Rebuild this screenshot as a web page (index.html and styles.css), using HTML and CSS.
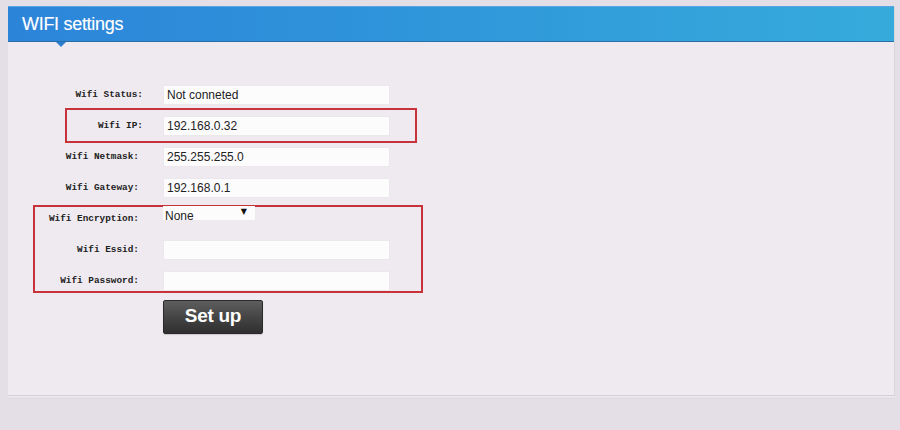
FILE: index.html
```html
<!DOCTYPE html>
<html>
<head>
<meta charset="utf-8">
<title>WIFI settings</title>
<link rel="stylesheet" href="styles.css">
</head>
<body>
<div class="panel">
  <div class="header"><h1 class="title">WIFI settings</h1><span class="pointer"></span></div>
  <form class="form">
    <div class="row"><label class="label">Wifi Status:</label><input class="field" type="text" value="Not conneted"></div>
    <div class="row mark-one"><label class="label">Wifi IP:</label><input class="field" type="text" value="192.168.0.32"></div>
    <div class="row"><label class="label narrow">Wifi Netmask:</label><input class="field" type="text" value="255.255.255.0"></div>
    <div class="row"><label class="label narrow">Wifi Gateway:</label><input class="field" type="text" value="192.168.0.1"></div>
    <div class="group mark-two">
      <div class="row"><label class="label narrow">Wifi Encryption:</label><span class="select-wrap"><select class="select"><option>None</option></select></span></div>
      <div class="row"><label class="label narrow">Wifi Essid:</label><input class="field" type="text" value=""></div>
      <div class="row"><label class="label narrow">Wifi Password:</label><input class="field" type="password" value=""></div>
    </div>
    <button class="button" type="button">Set up</button>
  </form>
</div>
</body>
</html>
```

FILE: styles.css
```css
html, body {
  margin: 0;
  padding: 0;
}
body {
  background: #e4dfe6;
  width: 900px;
  height: 430px;
  overflow: hidden;
  padding: 6px 0 0 8px;
  box-sizing: border-box;
}
.panel {
  width: 887px;
  height: 390px;
  background: #efeaf0;
  border-right: 1px solid #d9d4da;
  border-bottom: 1px solid #d6d1d8;
  box-shadow: 0 2px 0 #ebe6ec, 0 3px 0 #dcd7dd;
  box-sizing: border-box;
  position: relative;
}
.header {
  height: 36px;
  background: linear-gradient(to right, #2c84d9 0%, #2f95da 45%, #36abdb 100%);
  border-top: 1px solid #5aa6e4;
  border-bottom: 1px solid #2a6ea8;
  box-sizing: border-box;
  display: flex;
  align-items: center;
  padding-left: 14px;
  position: relative;
}
.title {
  margin: 0;
  color: #fff;
  font-family: "Liberation Sans", Arial, sans-serif;
  font-weight: normal;
  font-size: 18px;
  letter-spacing: -0.3px;
  text-shadow: 0 0 1px rgba(255,255,255,0.3);
}
.pointer {
  position: absolute;
  left: 48px;
  bottom: -6px;
  width: 0;
  height: 0;
  border-left: 5px solid transparent;
  border-right: 5px solid transparent;
  border-top: 5px solid #2c7fcf;
}
.form {
  padding-top: 37px;
  margin: 0;
}
.row {
  display: flex;
  align-items: center;
  height: 31px;
}
.label {
  width: 135px;
  text-align: right;
  padding-right: 0;
  box-sizing: border-box;
  font-family: "Liberation Mono", "Courier New", monospace;
  font-weight: bold;
  font-size: 9.4px;
  color: #222;
  flex: none;
}
.label.narrow {
  padding-right: 4px;
}
.field {
  margin-left: 20px;
  width: 227px;
  height: 20px;
  box-sizing: border-box;
  border: 1px solid #ebe7ec;
  background: #fdfcfd;
  padding: 0 2px 0 3px;
  font-family: "Liberation Sans", Arial, sans-serif;
  font-size: 12px;
  color: #222;
  outline: none;
}
.mark-one, .mark-two {
  position: relative;
}
.mark-one::before {
  content: "";
  position: absolute;
  left: 57px;
  top: -2px;
  width: 352px;
  height: 35px;
  border: 2px solid #c8323b;
  box-sizing: border-box;
}
.mark-two::before {
  content: "";
  position: absolute;
  left: 25px;
  top: 2px;
  width: 390px;
  height: 88px;
  border: 2px solid #c8323b;
  box-sizing: border-box;
}
.group .row:first-child {
  align-items: flex-start;
}
.group .row:first-child .label {
  margin-top: 10px;
}
.select-wrap {
  margin-left: 20px;
  margin-top: 3px;
  position: relative;
  width: 92px;
  height: 14px;
  background: #fdfcfd;
  display: block;
}
.select-wrap::after {
  content: "\25BC";
  position: absolute;
  right: 8px;
  top: 1px;
  font-size: 8px;
  line-height: 10px;
  color: #111;
  pointer-events: none;
  font-family: "DejaVu Sans", sans-serif;
}
.select {
  appearance: none;
  -webkit-appearance: none;
  border: none;
  background: transparent;
  width: 100%;
  height: 14px;
  padding: 0 0 0 2px;
  margin: 0;
  font-family: "Liberation Sans", Arial, sans-serif;
  font-size: 12px;
  line-height: 14px;
  color: #222;
  outline: none;
}
.button {
  display: block;
  margin: 4px 0 0 155px;
  width: 100px;
  height: 34px;
  border: 1px solid #2a2a2a;
  border-radius: 2px;
  background: linear-gradient(to bottom, #5e5e5e 0%, #454545 50%, #2f2f2f 100%);
  color: #fff;
  font-family: "Liberation Sans", Arial, sans-serif;
  font-weight: bold;
  font-size: 19px;
  letter-spacing: -0.3px;
  padding: 0 0 2px 0;
  box-shadow: 0 1px 1px rgba(0,0,0,0.15);
}
```
